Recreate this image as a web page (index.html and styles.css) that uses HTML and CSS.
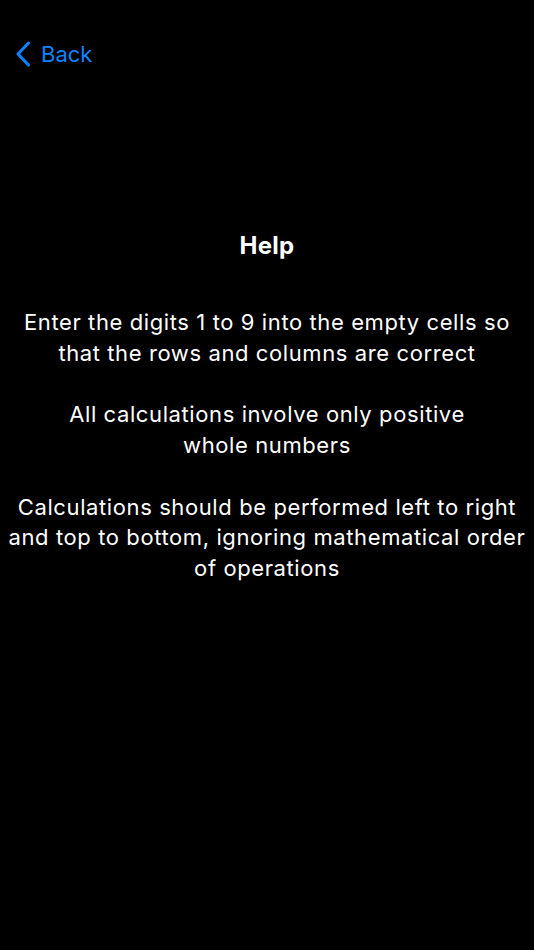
FILE: index.html
```html
<!DOCTYPE html>
<html lang="en">
<head>
    <meta charset="UTF-8">
    <meta name="viewport" content="width=device-width, initial-scale=1.0">
    <title>Help</title>
    <link rel="stylesheet" href="styles.css">
</head>
<body>
    <header class="navBar">
        <a class="back" href="#">
            <svg class="chevron" width="16" height="26" viewBox="0 0 16 26">
                <path d="M13.5 2 L3 13 L13.5 24" fill="none" stroke="#0A84FF" stroke-width="3" stroke-linecap="round" stroke-linejoin="round"/>
            </svg>
            <span>Back</span>
        </a>
    </header>

    <main class="help">
        <h1>Help</h1>
        <p>Enter the digits 1 to 9 into the empty cells so that the rows and columns are correct</p>
        <p>All calculations involve only positive<br>whole numbers</p>
        <p>Calculations should be performed left to right and top to bottom, ignoring mathematical order of operations</p>
    </main>
</body>
</html>
```

FILE: styles.css
```css
body {
    margin: 0;
    background-color: #000;
    color: #fff;
    font-family: Inter, "Noto Sans", sans-serif;
    height: 950px;
}

.navBar {
    display: flex;
    align-items: center;
    height: 44px;
    padding: 32px 0 0 15px;
}

.back {
    display: flex;
    align-items: center;
    gap: 10px;
    color: #0A84FF;
    text-decoration: none;
    font-size: 22px;
}

.chevron {
    display: block;
}

.help {
    padding: 155px 4px 0;
    text-align: center;
    font-size: 22px;
    line-height: 30.8px;
    letter-spacing: 0.6px;
}

.help h1 {
    margin: 0 0 45px;
    font-size: 24px;
    font-weight: 700;
    letter-spacing: 0.3px;
}

.help p {
    margin: 0 0 30.8px;
}
```
